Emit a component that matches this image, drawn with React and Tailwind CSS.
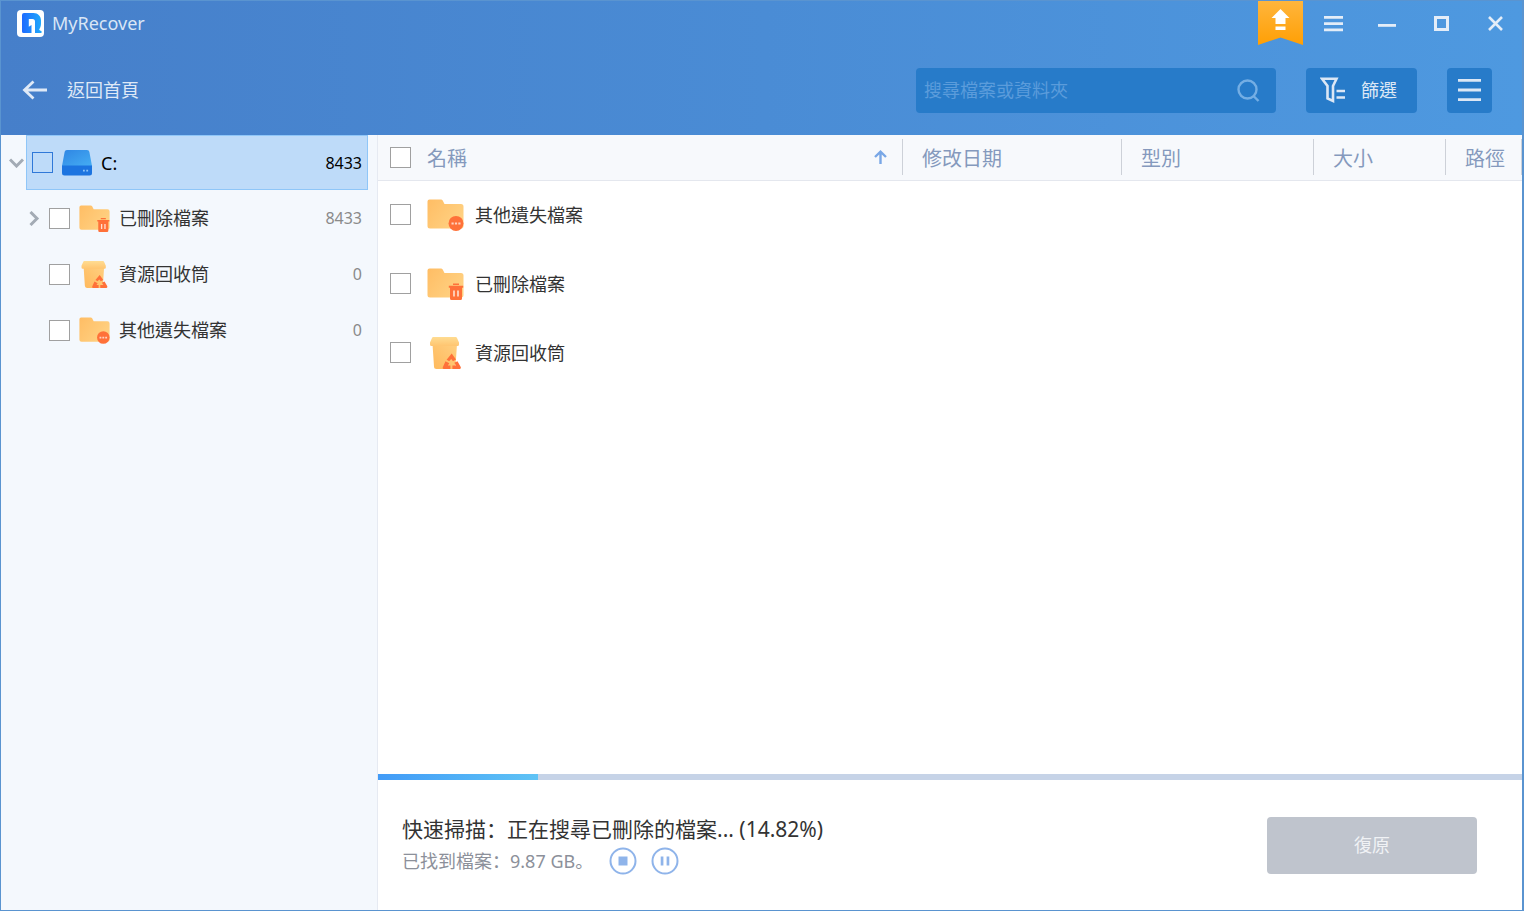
import React, { useState } from 'react';

const DriveIcon = () => (
  <svg viewBox="0 0 30 26" className="w-[30px] h-[26px] shrink-0">
    <defs>
      <linearGradient id="driveTop" x1="0" y1="0" x2="1" y2="1">
        <stop offset="0" stopColor="#2f86e4" />
        <stop offset="1" stopColor="#45adf3" />
      </linearGradient>
    </defs>
    <path d="M5 0h20a2.500 2.500 0 0 1 2.400 2L30 16H0L2.600 2A2.500 2.500 0 0 1 5 0z" fill="url(#driveTop)" />
    <path d="M0 15.500h30V23a2.500 2.500 0 0 1-2.500 2.500h-25A2.500 2.500 0 0 1 0 23z" fill="#1c74e0" />
    <path d="M21 19.700h1.800v1.800H21zM24.300 19.700h1.800v1.800h-1.800z" fill="#8cc4f8" />
  </svg>
);

const FolderShape = () => (
  <>
    <defs>
      <linearGradient id="folderFill" x1="0" y1="0" x2="1" y2="0.6">
        <stop offset="0" stopColor="#ffbd64" />
        <stop offset="1" stopColor="#ffd182" />
      </linearGradient>
    </defs>
    <path
      d="M2.500 0.500H14a2 2 0 0 1 1.700 1L17.500 5H34a2.500 2.500 0 0 1 2.500 2.500V27a2.500 2.500 0 0 1-2.500 2.500H3A2.500 2.500 0 0 1 0.500 27V2.500A2 2 0 0 1 2.500 0.500z"
      fill="url(#folderFill)"
    />
  </>
);

const OtherIcon = ({ className }) => (
  <svg viewBox="0 0 37 32" className={className}>
    <FolderShape />
    <circle cx="29" cy="24.400" r="7.500" fill="#ff7139" />
    <path d="M24.500 23.400h2.200v2h-2.200zM27.900 23.400h2.200v2h-2.200zM31.300 23.400h2.200v2h-2.200z" fill="#ffd3c0" />
  </svg>
);

const DeletedIcon = ({ className }) => (
  <svg viewBox="0 0 37 32" className={className}>
    <FolderShape />
    <path d="M26 15.500h6v1.500h-6zM21.800 17.700h14.400v2H35V30.500a1.500 1.500 0 0 1-1.500 1.500h-9a1.500 1.500 0 0 1-1.500-1.500V19.700h-1.200z" fill="#ff7139" />
    <path d="M26.200 22.500h1.600v6h-1.600zM30.200 22.500h1.600v6h-1.600z" fill="#ffe0d0" />
  </svg>
);

const RecycleIcon = ({ className }) => (
  <svg viewBox="0 0 37 32" className={className}>
    <defs>
      <linearGradient id="binFill" x1="0" y1="1" x2="1" y2="0">
        <stop offset="0" stopColor="#ffb95c" />
        <stop offset="1" stopColor="#ffcf80" />
      </linearGradient>
      <linearGradient id="binLid" x1="0" y1="0" x2="0" y2="1">
        <stop offset="0" stopColor="#ffdc92" />
        <stop offset="1" stopColor="#ffc570" />
      </linearGradient>
    </defs>
    <path d="M5.500 7H30l-1.500 22.500a2.500 2.500 0 0 1-2.500 2.500H9.500A2.500 2.500 0 0 1 7 29.500z" fill="url(#binFill)" />
    <path d="M6.500 0h22a1.500 1.500 0 0 1 1.500 1l2 4.500v2A1.500 1.500 0 0 1 30.500 9h-26A1.500 1.500 0 0 1 3 7.500v-2L5 1a1.500 1.500 0 0 1 1.500-1z" fill="url(#binLid)" />
    <path
      d="M24.700 16.500l4.300 6-3 1.700-1.800-2.200-2 2.200-2.600-1.500zM18.500 24.300l3.800 2-1.500 2.200h2.600V32h-6.600c-1.200 0-1.300-1.200-.8-2.200zM30.500 24.300l3.100 5.500c.6 1.100.2 2.200-1 2.200h-7.200v-3.500h3.600l-1.700-2.800z"
      fill="#ff7139"
    />
  </svg>
);

const icons = {
  other: OtherIcon,
  deleted: DeletedIcon,
  recycle: RecycleIcon,
};

const Checkbox = ({ id, label, active }) => (
  <input
    id={id}
    type="checkbox"
    aria-label={label}
    className={`appearance-none w-[21px] h-[21px] shrink-0 border checked:bg-[#3d85e0] ${active ? 'border-[#2f78d8]' : 'border-[#a0a0a0] bg-white'}`}
  />
);

const treeItems = [
  { id: 'deleted', name: '已刪除檔案', count: 8433, expandable: true },
  { id: 'recycle', name: '資源回收筒', count: 0 },
  { id: 'other', name: '其他遺失檔案', count: 0 },
];

const files = [
  { id: 'other', name: '其他遺失檔案' },
  { id: 'deleted', name: '已刪除檔案' },
  { id: 'recycle', name: '資源回收筒' },
];

const columns = ['修改日期', '型別', '大小', '路徑'];

const TitleBar = () => (
  <div className="flex items-start h-11">
    <div className="flex items-center gap-2 h-11 pl-4">
      <svg viewBox="0 0 27 27" className="w-[27px] h-[27px]">
        <defs>
          <linearGradient id="logoFill" x1="0" y1="0" x2="1" y2="0">
            <stop offset="0" stopColor="#1f6bff" />
            <stop offset="1" stopColor="#1fa9fb" />
          </linearGradient>
        </defs>
        <rect width="27" height="27" rx="4" fill="#fff" />
        <path
          d="M7 3h9.500c4.500 0 7.500 3.200 7.500 7.500v3c0 2.500-.7 4.500-1.800 5.800.3 1 1 1.500 2.300 1.700v2H6.500A1.500 1.500 0 0 1 5 21.500V5a2 2 0 0 1 2-2z"
          fill="url(#logoFill)"
        />
        <path d="M11.800 9h3.700a2.500 2.500 0 0 1 2.500 2.500V23h-3.500v-8l-2.700 1.800z" fill="#fff" />
      </svg>
      <h1 className="text-lg text-[#d9e6f6]">MyRecover</h1>
    </div>
    <div className="flex items-start ml-auto text-[#e4edf8]">
      <button aria-label="升級" className="w-[45px] mr-[3px]">
        <svg viewBox="0 0 45 44" className="w-full h-11">
          <defs>
            <linearGradient id="ribbon" x1="0" y1="0" x2="0" y2="1">
              <stop offset="0" stopColor="#ffb53c" />
              <stop offset="1" stopColor="#ff9f05" />
            </linearGradient>
          </defs>
          <path d="M0 0h45v44l-22.500-7.500L0 44z" fill="url(#ribbon)" />
          <path d="M22.500 8l9 9H27.500v6h-10v-6h-4zM17.500 25.500h10v3.500h-10z" fill="#fff" />
        </svg>
      </button>
      <button aria-label="選單" className="w-[54px] h-11 flex items-center justify-center">
        <svg viewBox="0 0 19 17" className="w-[19px] h-[17px]" fill="currentColor">
          <path d="M0 1h19v2.800H0zM0 7.200h19v2.800H0zM0 13.400h19v2.800H0z" />
        </svg>
      </button>
      <button aria-label="最小化" className="w-[54px] h-11 flex items-center justify-center">
        <svg viewBox="0 0 18 17" className="w-[18px] h-[17px]" fill="currentColor">
          <path d="M0 9h18v2.800H0z" />
        </svg>
      </button>
      <button aria-label="最大化" className="w-[54px] h-11 flex items-center justify-center">
        <svg viewBox="0 0 15 15" className="w-[15px] h-[15px]" fill="none" stroke="currentColor" strokeWidth="3">
          <path d="M1.500 1.500h12v12h-12z" />
        </svg>
      </button>
      <button aria-label="關閉" className="w-[54px] h-11 flex items-center justify-center">
        <svg viewBox="0 0 15 15" className="w-[15px] h-[15px]" fill="none" stroke="currentColor" strokeWidth="2.600">
          <path d="M1 1l13 13M14 1L1 14" />
        </svg>
      </button>
    </div>
  </div>
);

const Toolbar = () => {
  const [query, setQuery] = useState('');

  return (
    <div className="flex items-center h-[90px] pl-5 pr-[30px]">
      <button className="flex items-center gap-5 text-lg text-[#dfe9f7]">
        <svg viewBox="0 0 26 20" className="w-[26px] h-5" fill="none" stroke="currentColor" strokeWidth="2.800">
          <path d="M26 10H3M12.500 1.500L3.500 10l9 8.500" />
        </svg>
        返回首頁
      </button>
      <div className="flex items-center gap-[30px] ml-auto">
        <div className="flex items-center w-[360px] h-[45px] px-2 rounded bg-[#277bc9]">
          <input
            type="text"
            aria-label="搜尋"
            placeholder="搜尋檔案或資料夾"
            value={query}
            onChange={(e) => setQuery(e.target.value)}
            className="flex-1 min-w-0 bg-transparent text-lg text-white placeholder:text-[#5b9cdb] outline-none"
          />
          <svg viewBox="0 0 24 24" className="w-6 h-6 mr-2" fill="none" stroke="#74aee4" strokeWidth="2.400">
            <circle cx="11.500" cy="11.500" r="9" />
            <path d="M17.500 18l5 5" />
          </svg>
        </div>
        <button className="flex items-center gap-4 w-[111px] h-[45px] pl-[14px] rounded bg-[#277bc9] text-lg text-[#dbe7f5]">
          <svg viewBox="0 0 25 26" className="w-[25px] h-[26px]" fill="none" stroke="currentColor" strokeWidth="2.600">
            <path d="M2 1.800h14.500L13 9v15l-5.500-2.500V9z" />
            <path d="M16.500 14H25M16.500 20.500H25" />
          </svg>
          篩選
        </button>
        <button aria-label="檢視" className="flex items-center justify-center w-[45px] h-[45px] rounded bg-[#277bc9] text-[#dbe7f5]">
          <svg viewBox="0 0 23 22" className="w-[23px] h-[22px]" fill="currentColor">
            <path d="M0 0h23v2.800H0zM0 9.600h23v2.800H0zM0 19.200h23V22H0z" />
          </svg>
        </button>
      </div>
    </div>
  );
};

const Sidebar = () => (
  <aside className="w-[377px] shrink-0 bg-[#f4f8fd] border-r border-[#e6eaf2]">
    <ul>
      <li className="flex items-center h-[55px] pr-[9px]">
        <button aria-label="收合" className="w-[25px] shrink-0 pl-2">
          <svg viewBox="0 0 15 10" className="w-[15px] h-[10px]" fill="none" stroke="#a3abb5" strokeWidth="3">
            <path d="M1 1.500l6.500 6.500L14 1.500" />
          </svg>
        </button>
        <div className="flex-1 flex items-center h-full px-[5px] bg-[#bedbf9] border border-[#8fc6f8] text-black">
          <Checkbox id="drive-c" active />
          <label htmlFor="drive-c" className="flex flex-1 items-center gap-[9px] pl-[9px] text-lg">
            <DriveIcon />
            C:
          </label>
          <span>8433</span>
        </div>
      </li>
      {treeItems.map((item) => {
        const Icon = icons[item.id];
        return (
          <li key={item.id} className="flex items-center h-14 pl-[27px] pr-[15px]">
            <div className="w-[21px] shrink-0">
              {item.expandable && (
                <button aria-label="展開" className="block">
                  <svg viewBox="0 0 12 15" className="w-3 h-[15px]" fill="none" stroke="#a3abb5" strokeWidth="3">
                    <path d="M2.500 1l6.500 6.500L2.500 14" />
                  </svg>
                </button>
              )}
            </div>
            <Checkbox id={`tree-${item.id}`} />
            <label htmlFor={`tree-${item.id}`} className="flex flex-1 items-center gap-[9px] pl-[9px] text-lg text-[#333]">
              <Icon className="w-[31px] h-[27px] shrink-0" />
              {item.name}
            </label>
            <span className="text-[#8a8a8a]">{item.count}</span>
          </li>
        );
      })}
    </ul>
  </aside>
);

const FileTable = () => (
  <table className="w-full table-fixed border-collapse">
    <colgroup>
      <col />
      <col className="w-[219px]" />
      <col className="w-[192px]" />
      <col className="w-[132px]" />
      <col className="w-[76px]" />
    </colgroup>
    <thead className="bg-[#f7f9fc] text-xl text-[#8599bd]">
      <tr className="h-[45px] border-b border-[#e4e7ee]">
        <th className="p-0 font-normal">
          <div className="flex items-center h-9 pl-3 pr-[15px] border-r border-[#cdd1d8]">
            <Checkbox id="select-all" label="全選" />
            <span className="pl-4 pt-1">名稱</span>
            <svg viewBox="0 0 13 14" className="w-[13px] h-[14px] ml-auto" fill="none" stroke="#79a7e6" strokeWidth="2.400">
              <path d="M6.500 14V2M1 7l5.500-5.300L12 7" />
            </svg>
          </div>
        </th>
        {columns.map((name) => (
          <th key={name} className="p-0 font-normal text-left">
            <div className="flex items-center h-9 pl-[19px] pt-1 border-r border-[#cdd1d8] whitespace-nowrap">{name}</div>
          </th>
        ))}
      </tr>
    </thead>
    <tbody>
      {files.map((file) => {
        const Icon = icons[file.id];
        return (
          <tr key={file.id} className="h-[69px]">
            <td className="p-0">
              <div className="flex items-center pl-3">
                <Checkbox id={`file-${file.id}`} />
                <label htmlFor={`file-${file.id}`} className="flex items-center gap-[11px] pl-4 text-lg text-[#333]">
                  <Icon className="w-[37px] h-8 shrink-0" />
                  {file.name}
                </label>
              </div>
            </td>
            <td colSpan={4}></td>
          </tr>
        );
      })}
    </tbody>
  </table>
);

const ScanStatus = ({ percent }) => (
  <footer lang="zh-Hans">
    <div className="h-[6px] bg-[#c6d3e7]">
      <div className="h-full bg-linear-to-r from-[#429bf7] to-[#5fc3f5]" style={{ width: `${Math.floor(percent)}%` }}></div>
    </div>
    <div className="flex items-center justify-between h-[130px] pl-6 pr-[45px]">
      <div>
        <p className="text-[21px] leading-8 text-[#333]">快速掃描：正在搜尋已刪除的檔案... ({percent}%)</p>
        <div className="flex items-center h-8 text-lg text-[#8c909a]">
          <span>已找到檔案：9.87 GB。</span>
          <button aria-label="停止" className="ml-4">
            <svg viewBox="0 0 28 28" className="w-7 h-7">
              <circle cx="14" cy="14" r="12.500" fill="none" stroke="#8fb4ea" strokeWidth="2" />
              <path d="M9.500 9.500h9v9h-9z" fill="#8fb4ea" />
            </svg>
          </button>
          <button aria-label="暫停" className="ml-[14px]">
            <svg viewBox="0 0 28 28" className="w-7 h-7">
              <circle cx="14" cy="14" r="12.500" fill="none" stroke="#8fb4ea" strokeWidth="2" />
              <path d="M9.700 9.500h2.700v9H9.700zM15.600 9.500h2.700v9h-2.700z" fill="#8fb4ea" />
            </svg>
          </button>
        </div>
      </div>
      <button disabled className="w-[210px] h-[57px] rounded bg-[#bfc4cd] text-lg text-[#f0f2f5]">
        復原
      </button>
    </div>
  </footer>
);

export default function App() {
  return (
    <div
      lang="zh-Hant"
      className="flex flex-col min-h-screen bg-white border border-r-2 border-[#5a94d0] text-base font-['Noto_Sans','Noto_Sans_CJK_SC',sans-serif]"
    >
      <header className="bg-linear-to-r from-[#467fca] to-[#4e99e0]">
        <TitleBar />
        <Toolbar />
      </header>
      <div className="flex flex-1">
        <Sidebar />
        <main className="flex flex-1 flex-col min-w-0">
          <div className="flex-1">
            <FileTable />
          </div>
          <ScanStatus percent={14.82} />
        </main>
      </div>
    </div>
  );
}
